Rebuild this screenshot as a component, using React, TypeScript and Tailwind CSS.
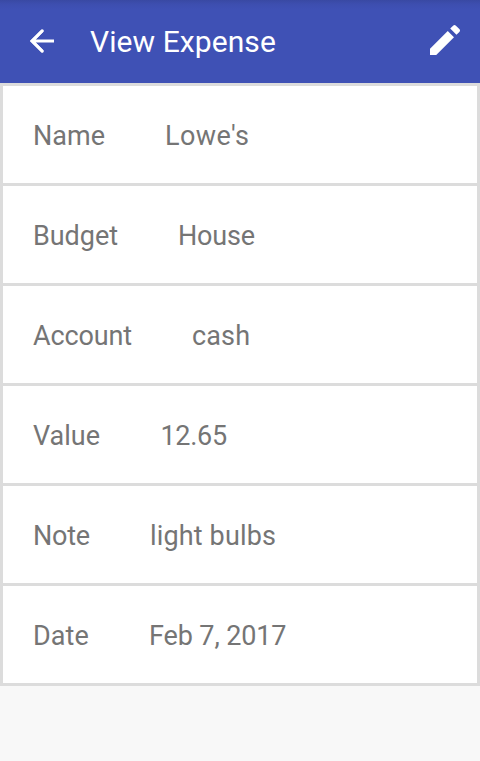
const rows = [
  { label: "Name", value: "Lowe's", labelClass: "w-[72px]", valueClass: "tracking-[0.4px]" },
  { label: "Budget", value: "House", labelClass: "w-[85px] tracking-[-0.05px]", valueClass: "tracking-[-0.2px]" },
  { label: "Account", value: "cash", labelClass: "w-[99px] tracking-[-0.15px]", valueClass: "tracking-[0.15px]" },
  { label: "Value", value: "12.65", labelClass: "w-[67.5px]", valueClass: "tracking-[-0.3px]" },
  { label: "Note", value: "light bulbs", labelClass: "w-[57px] tracking-[-0.25px]", valueClass: "tracking-[0.15px]" },
  { label: "Date", value: "Feb 7, 2017", labelClass: "w-[56px] tracking-[0.1px]", valueClass: "tracking-[-0.12px]" },
];

export default function App() {
  return (
    <div className="min-h-screen bg-[#f8f8f8] font-['Roboto',sans-serif]">
      <header className="flex h-[83px] items-center bg-[#3f51b5] bg-[linear-gradient(to_bottom,#3949a3_0px,#3d4eaf_4px,#3f51b5_9px)] pl-[24px] pr-[15px] text-white">
        <svg viewBox="0 0 24 24" className="mb-px h-9 w-9" fill="none" stroke="currentColor" strokeWidth="2">
          <path d="M20 12H5.2M12.4 5 5.4 12l7 7" strokeLinecap="butt" />
          <path d="M12.2 5.2 5.4 12l6.8 6.8" strokeLinecap="round" />
        </svg>
        <h1 className="ml-[30px] flex-1 text-[30px] leading-9 tracking-[0.08px]">View Expense</h1>
        <svg viewBox="0 0 24 24" className="mb-[3px] h-10 w-10" fill="currentColor">
          <path d="M3 17.25V21h3.75L17.4 10.35 13.65 6.6 3 17.25zM20.6 7.15c.55-.55.55-1.15 0-1.7l-2.05-2.05c-.55-.55-1.15-.55-1.7 0L15.13 5.12l3.75 3.75 1.72-1.72z" />
        </svg>
      </header>
      <main className="flex flex-col gap-[3px] bg-[#dcdcdc] p-[3px]">
        {rows.map((row) => (
          <div key={row.label} className="flex h-[97px] items-center gap-[60px] bg-white pt-[4px] pl-[30px] text-[27px] text-[#757575]">
            <span className={`${row.labelClass} whitespace-nowrap`}>{row.label}</span>
            <span className={`${row.valueClass} whitespace-nowrap`}>{row.value}</span>
          </div>
        ))}
      </main>
    </div>
  );
}
